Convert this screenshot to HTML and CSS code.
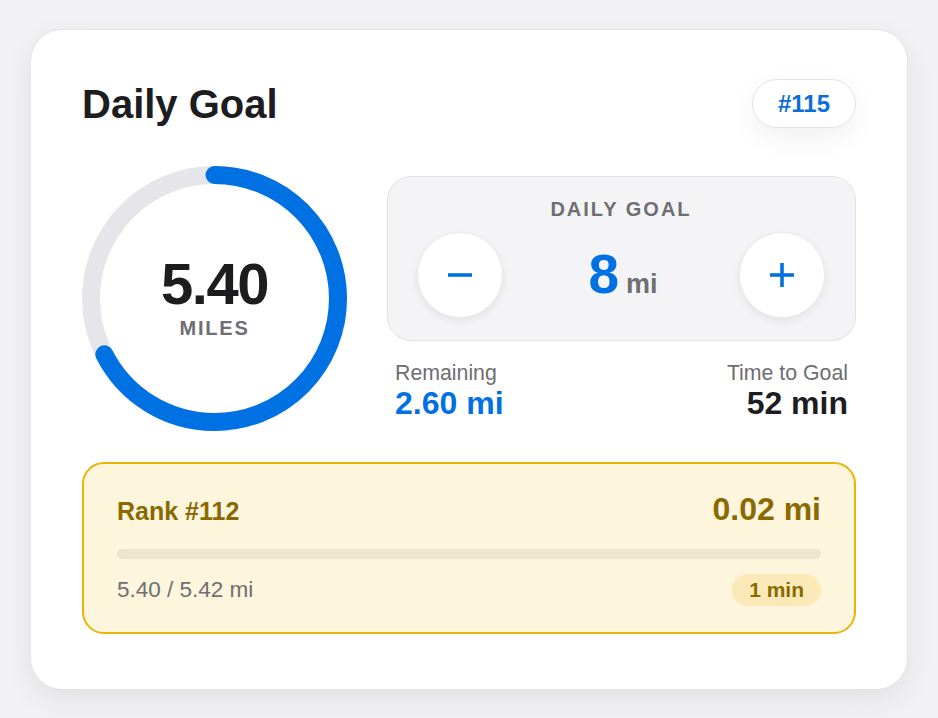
FILE: index.html
```html
<!DOCTYPE html>
<html lang="en">
<head>
<meta charset="utf-8">
<title>Daily Goal</title>
<link rel="stylesheet" href="styles.css">
</head>
<body>
<main class="card">
  <header class="card-header">
    <h1 class="title">Daily Goal</h1>
    <span class="rank-badge">#115</span>
  </header>

  <section class="main-row">
    <div class="ring">
      <svg class="ring-svg" width="265" height="265" viewBox="0 0 265 265">
        <circle class="ring-track" cx="132.5" cy="132.5" r="123.5"></circle>
        <circle class="ring-progress" cx="132.5" cy="132.5" r="123.5" stroke-dasharray="523.8 775.97"></circle>
      </svg>
      <div class="ring-text">
        <div class="ring-value">5.40</div>
        <div class="ring-unit">MILES</div>
      </div>
    </div>

    <div class="side">
      <div class="goal-box">
        <div class="goal-label">DAILY GOAL</div>
        <div class="goal-controls">
          <button class="step-btn" aria-label="Decrease">
            <svg width="24" height="24" viewBox="0 0 24 24"><line x1="0" y1="12" x2="24" y2="12" stroke="#0071e3" stroke-width="3.6"/></svg>
          </button>
          <div class="goal-value"><span class="goal-num">8</span><span class="goal-unit">mi</span></div>
          <button class="step-btn" aria-label="Increase">
            <svg width="24" height="24" viewBox="0 0 24 24"><line x1="0" y1="12" x2="24" y2="12" stroke="#0071e3" stroke-width="3.6"/><line x1="12" y1="0" x2="12" y2="24" stroke="#0071e3" stroke-width="3.6"/></svg>
          </button>
        </div>
      </div>
      <div class="stats">
        <div class="stat">
          <div class="stat-label">Remaining</div>
          <div class="stat-value blue">2.60 mi</div>
        </div>
        <div class="stat right">
          <div class="stat-label">Time to Goal</div>
          <div class="stat-value">52 min</div>
        </div>
      </div>
    </div>
  </section>

  <section class="next-rank">
    <div class="next-top">
      <span class="next-title">Rank #112</span>
      <span class="next-gap">0.02 mi</span>
    </div>
    <div class="next-bar"><div class="next-fill" style="width:0%"></div></div>
    <div class="next-bottom">
      <span class="next-progress">5.40 / 5.42 mi</span>
      <span class="next-time">1 min</span>
    </div>
  </section>
</main>
</body>
</html>
```

FILE: styles.css
```css
* { box-sizing: border-box; }

html, body {
  margin: 0;
  padding: 0;
}

body {
  background: #f2f2f4;
  font-family: "Liberation Sans", Arial, sans-serif;
  color: #1d1d1f;
  padding: 29px 30px 40px;
}

.card {
  width: 878px;
  background: #ffffff;
  border: 1px solid #e4e4e8;
  border-radius: 32px;
  padding: 49px 51px 55px;
  box-shadow: 0 10px 30px rgba(0, 0, 0, 0.07);
}

.card-header {
  display: flex;
  justify-content: space-between;
  align-items: center;
  margin-bottom: 38px;
}

.title {
  margin: 0;
  font-size: 40px;
  font-weight: 700;
  line-height: 46px;
  color: #1d1d1f;
}

.rank-badge {
  display: inline-block;
  height: 49px;
  padding: 0 25px;
  border: 1px solid #e3e3e8;
  border-radius: 25px;
  background: #fff;
  color: #0a6fd8;
  font-size: 24px;
  font-weight: 700;
  line-height: 47px;
  box-shadow: 0 10px 28px rgba(0, 0, 0, 0.06);
}

.main-row {
  display: flex;
  align-items: center;
  gap: 40px;
  margin-bottom: 31px;
}

.ring {
  display: grid;
  width: 265px;
  height: 265px;
  flex: none;
}

.ring-svg,
.ring-text {
  grid-area: 1 / 1;
}

.ring-svg {
  transform: rotate(-90deg);
}

.ring-track {
  fill: none;
  stroke: #e5e5ea;
  stroke-width: 18;
}

.ring-progress {
  fill: none;
  stroke: #0071e3;
  stroke-width: 18;
  stroke-linecap: round;
}

.ring-text {
  display: flex;
  flex-direction: column;
  align-items: center;
  justify-content: center;
  padding-bottom: 2px;
}

.ring-value {
  font-size: 58px;
  font-weight: 700;
  line-height: 1;
  letter-spacing: -1.5px;
  color: #1d1d1f;
}

.ring-unit {
  margin-top: 3px;
  font-size: 20px;
  font-weight: 700;
  line-height: 24px;
  letter-spacing: 1.8px;
  color: #6e6e73;
}

.side {
  flex: 1;
  display: flex;
  flex-direction: column;
}

.goal-box {
  background: #f4f4f6;
  border: 1px solid #e2e2e7;
  border-radius: 24px;
  padding: 21px 30px 22px 29px;
}

.goal-label {
  text-align: center;
  font-size: 20px;
  font-weight: 700;
  line-height: 23px;
  letter-spacing: 2px;
  color: #6e6e73;
}

.goal-controls {
  display: flex;
  align-items: center;
  justify-content: space-between;
  margin-top: 11px;
}

.step-btn {
  width: 86px;
  height: 86px;
  border-radius: 50%;
  border: 1px solid #ebebef;
  background: #ffffff;
  box-shadow: 0 3px 10px rgba(0, 0, 0, 0.07);
  display: flex;
  align-items: center;
  justify-content: center;
  padding: 0;
  cursor: pointer;
}

.goal-value {
  display: flex;
  align-items: baseline;
  padding-left: 4px;
}

.goal-num {
  font-size: 55px;
  font-weight: 700;
  line-height: 1;
  color: #0071e3;
}

.goal-unit {
  margin-left: 7px;
  font-size: 27px;
  font-weight: 700;
  color: #6e6e73;
}

.stats {
  display: flex;
  justify-content: space-between;
  margin-top: 20px;
  padding: 0 8px;
}

.stat.right {
  text-align: right;
}

.stat-label {
  font-size: 21.3px;
  line-height: 24px;
  color: #6e6e73;
}

.stat-value {
  font-size: 32px;
  font-weight: 700;
  line-height: 37px;
  color: #1d1d1f;
}

.stat-value.blue {
  color: #0071e3;
}

.next-rank {
  background: #fdf5dc;
  border: 2px solid #eab308;
  border-radius: 22px;
  padding: 27px 33px 26px;
}

.next-top {
  display: flex;
  justify-content: space-between;
  align-items: baseline;
  line-height: 36px;
}

.next-title {
  font-size: 25px;
  font-weight: 700;
  color: #8a6a00;
}

.next-gap {
  font-size: 32px;
  font-weight: 700;
  color: #8a6a00;
}

.next-bar {
  height: 10px;
  margin-top: 20px;
  border-radius: 5px;
  background: #ede5cd;
  overflow: hidden;
}

.next-fill {
  height: 100%;
  background: #eab308;
}

.next-bottom {
  display: flex;
  justify-content: space-between;
  align-items: center;
  margin-top: 15px;
}

.next-progress {
  font-size: 22.5px;
  color: #6e6e73;
}

.next-time {
  padding: 4px 17px;
  border-radius: 16px;
  background: #fbeab7;
  color: #8a6a00;
  font-size: 21px;
  font-weight: 700;
  line-height: 24px;
}
```
